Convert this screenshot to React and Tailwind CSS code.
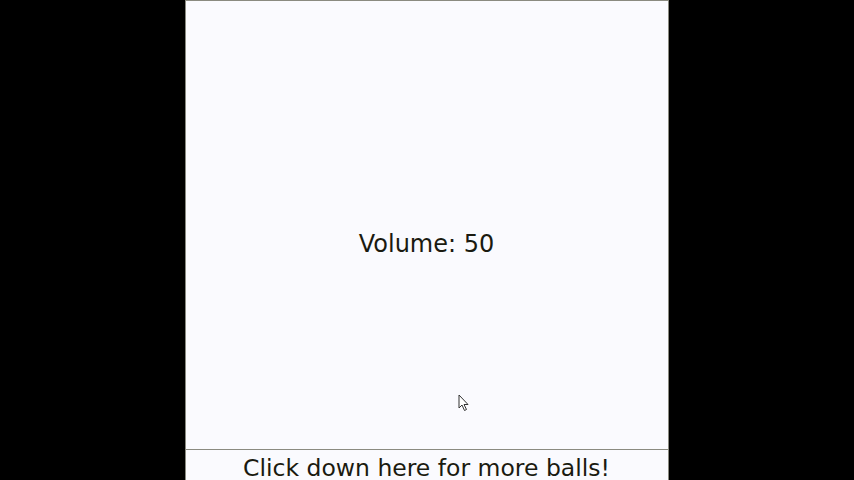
export default function App() {
  return (
    <div className="w-[854px] h-[480px] bg-black flex justify-center overflow-hidden" style={{ fontFamily: '"DejaVu Sans", sans-serif' }}>
      <div className="w-[484px] h-[480px] ml-[-1px] bg-[#fafafe] border-l border-r border-t border-[#8a8a80] flex flex-col">
        {/* Ball area */}
        <div className="flex-1 relative flex items-center justify-center">
          <span className="text-[24px] text-[#1a1a10] mt-[38px]">Volume: 50</span>
          <svg className="absolute left-[272px] top-[393px]" width="12" height="18" viewBox="0 0 12 18">
            <path d="M1 1 L1 14 L4 11 L6.5 16.5 L8.5 15.5 L6 10.5 L10 10.5 Z" fill="white" stroke="#333" strokeWidth="1" />
          </svg>
        </div>
        {/* Button strip */}
        <div className="h-[31px] border-t border-[#8a8a80] flex items-center justify-center">
          <span className="text-[23.5px] text-[#1a1a10] leading-none mt-[8px]">Click down here for more balls!</span>
        </div>
      </div>
    </div>
  );
}
